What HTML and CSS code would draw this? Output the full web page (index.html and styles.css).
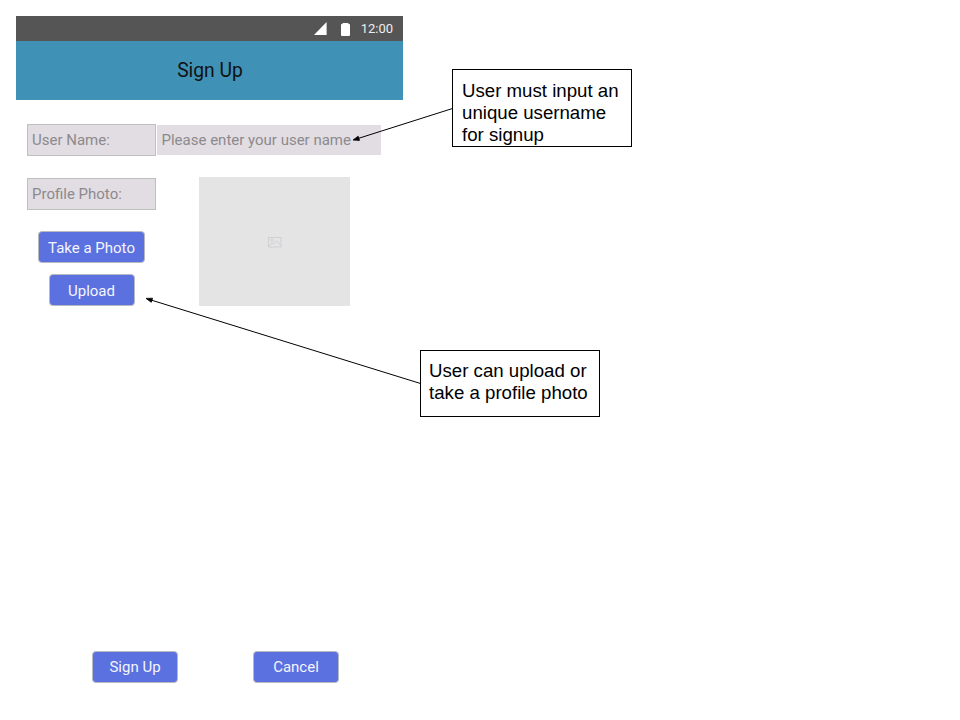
FILE: index.html
```html
<!DOCTYPE html>
<html lang="en">
<head>
<meta charset="utf-8">
<title>Sign Up</title>
<link rel="stylesheet" href="styles.css">
</head>
<body>
<main class="canvas">
  <section class="phone">
    <div class="status">
      <svg class="signal" width="13" height="13" viewBox="0 0 13 13"><path d="M0 13L12.6 0V13Z" fill="#fff"/></svg>
      <svg class="battery" width="9" height="13" viewBox="0 0 9 13"><path d="M2 0H7L7.5 .7Q9 .8 9 2V12Q9 13 8 13H1Q0 13 0 12V2Q0 .8 1.5 .7Z" fill="#fff"/></svg>
      <span class="time">12:00</span>
    </div>
    <header class="appbar"><span>Sign Up</span></header>
    <div class="form">
      <div class="row">
        <div class="label">User Name:</div>
        <div class="input">Please enter your user name</div>
      </div>
      <div class="profile">
        <div class="controls">
          <div class="label">Profile Photo:</div>
          <div class="button wide">Take a Photo</div>
          <div class="button">Upload</div>
        </div>
        <div class="photo">
          <svg width="14" height="11" viewBox="0 0 14 11" fill="none" stroke="#cfd0d4"><rect x=".5" y=".5" width="12.5" height="9.5"/><circle cx="4" cy="3.3" r="1"/><path d="M1 9L4 6L5.5 7L8.5 3.8L13 8.5"/></svg>
        </div>
      </div>
    </div>
    <footer class="actions">
      <div class="button">Sign Up</div>
      <div class="button">Cancel</div>
    </footer>
  </section>
  <svg class="arrows" width="960" height="720" viewBox="0 0 960 720">
    <path d="M452.5 108.5L358 138.5M420.5 383.5L151 300" stroke="#000" stroke-width="1"/>
    <path d="M353 140L358.2 136.2L359.5 140.4ZM146 298.4L152.6 298.2L151.3 302.3Z" fill="#000" stroke="#000" stroke-width=".8"/>
  </svg>
  <div class="note note-username"><p>User must input an<br>unique username<br>for signup</p></div>
  <div class="note note-photo"><p>User can upload or<br>take a profile photo</p></div>
</main>
</body>
</html>
```
FILE: styles.css
```css
* { box-sizing: border-box; }
body { margin: 0; background: #fff; }
.canvas {
  position: relative;
  width: 960px;
  height: 720px;
  padding: 16px;
  overflow: hidden;
}
.phone {
  width: 387px;
  height: 688px;
  display: flex;
  flex-direction: column;
  font: 15px/20px Roboto, sans-serif;
}
.status {
  height: 25px;
  flex: none;
  background: #555;
  display: flex;
  align-items: center;
  justify-content: flex-end;
  padding-right: 10px;
  color: #eee;
}
.battery { margin: 1px 11px 0 14px; }
.time { font-size: 13px; }
.appbar {
  height: 59px;
  flex: none;
  background: #4091b6;
  display: flex;
  align-items: center;
  justify-content: center;
  padding-left: 1px;
  font-size: 19.3px;
  color: #111;
}
.form { padding: 24px 0 0 11px; }
.row { display: flex; align-items: center; gap: 1px; }
.label {
  width: 129px;
  height: 32px;
  padding: 5px 0 0 4px;
  border: 1px solid #bfbfc0;
  background: #e2dde3;
  color: #8c8a8d;
}
.input {
  width: 224px;
  height: 30px;
  padding: 5px 0 0 4.5px;
  background: #e2dde3;
  color: #8c8a8d;
}
.profile { display: flex; gap: 43px; margin-top: 21px; }
.controls { display: flex; flex-direction: column; align-items: center; }
.controls .label { margin-top: 1px; }
.button {
  width: 86px;
  height: 32px;
  padding-top: 5px;
  border: 1px solid #b9babf;
  border-radius: 4px;
  background: #5b71e0;
  color: #f4f5fd;
  text-align: center;
}
.controls .button { margin-top: 11px; }
.controls .wide { width: 107px; margin-top: 21px; }
.controls .button { padding-top: 6px; }
.photo {
  width: 151px;
  height: 129px;
  padding-top: 1px;
  background: #e4e4e4;
  display: flex;
  align-items: center;
  justify-content: center;
}
.actions { margin-top: auto; padding: 0 0 21px 76px; display: flex; gap: 75px; }
.arrows { position: absolute; left: 0; top: 0; }
.note {
  position: absolute;
  width: 180px;
  padding: 9px 0 0 9px;
  border: 1px solid #000;
  background: #fff;
  color: #000;
  font: 18.67px/22px "Liberation Sans", Arial, sans-serif;
  white-space: nowrap;
}
.note p { margin: 0; }
.note-username { left: 452px; top: 69px; height: 78px; padding-top: 10px; }
.note-photo { left: 420px; top: 350px; height: 67px; padding-left: 8px; }
```
